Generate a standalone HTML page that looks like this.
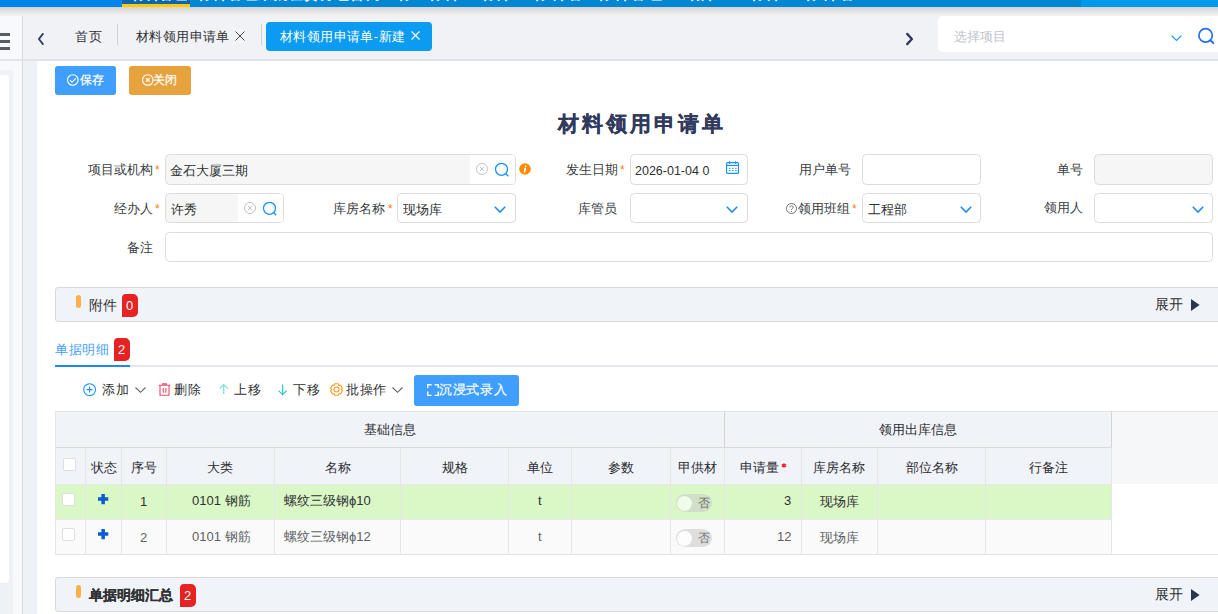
<!DOCTYPE html>
<html><head><meta charset="utf-8">
<style>
*{box-sizing:border-box;margin:0;padding:0}
html,body{width:1218px;height:614px;overflow:hidden;background:#fff;font-family:"Liberation Sans",sans-serif;color:#303133}
.a{position:absolute}
svg{position:absolute;overflow:visible}
.t{position:absolute;white-space:nowrap;line-height:1}
</style></head><body>
<div class="a" style="left:0px;top:0px;width:1218px;height:7px;background:#0086e8;"></div>
<div class="a" style="left:190px;top:0px;width:891px;height:7px;background:#0086d2;"></div>
<div class="a" style="left:1081px;top:0px;width:137px;height:7px;background:#0099ea;"></div>
<div class="a" style="left:122px;top:0px;width:68px;height:7px;background:#0a66b0;border-bottom:3px solid #ffcc00"></div>
<div class="a" style="left:130.7px;top:0;width:56.5px;height:3px;overflow:hidden"><div class="t" style="left:0;top:-13px;font-size:14px;font-weight:bold;color:#fff;letter-spacing:0.17px">材料管理</div></div>
<div class="a" style="left:197px;top:0;width:189px;height:3px;overflow:hidden"><div class="t" style="left:0;top:-13px;font-size:14px;font-weight:bold;color:#fff;letter-spacing:1.33px">材料管理采购租赁分包合同结</div></div>
<div class="a" style="left:397px;top:0;width:19px;height:3px;overflow:hidden"><div class="t" style="left:0;top:-13px;font-size:14px;font-weight:bold;color:#fff;letter-spacing:0.00px">材</div></div>
<div class="a" style="left:428px;top:0;width:32px;height:3px;overflow:hidden"><div class="t" style="left:0;top:-13px;font-size:14px;font-weight:bold;color:#fff;letter-spacing:2.00px">材料</div></div>
<div class="a" style="left:481px;top:0;width:30px;height:3px;overflow:hidden"><div class="t" style="left:0;top:-13px;font-size:14px;font-weight:bold;color:#fff;letter-spacing:0.00px">材料</div></div>
<div class="a" style="left:533px;top:0;width:50px;height:3px;overflow:hidden"><div class="t" style="left:0;top:-13px;font-size:14px;font-weight:bold;color:#fff;letter-spacing:3.50px">材料管</div></div>
<div class="a" style="left:597px;top:0;width:65px;height:3px;overflow:hidden"><div class="t" style="left:0;top:-13px;font-size:14px;font-weight:bold;color:#fff;letter-spacing:3.00px">材料管理</div></div>
<div class="a" style="left:687.5px;top:0;width:27.0px;height:3px;overflow:hidden"><div class="t" style="left:0;top:-13px;font-size:14px;font-weight:bold;color:#fff;letter-spacing:-3.00px">材料</div></div>
<div class="a" style="left:749.6px;top:0;width:31.899999999999977px;height:3px;overflow:hidden"><div class="t" style="left:0;top:-13px;font-size:14px;font-weight:bold;color:#fff;letter-spacing:1.90px">材料</div></div>
<div class="a" style="left:803.7px;top:0;width:51.69999999999993px;height:3px;overflow:hidden"><div class="t" style="left:0;top:-13px;font-size:14px;font-weight:bold;color:#fff;letter-spacing:4.35px">材料管</div></div>
<div class="a" style="left:0px;top:7px;width:1218px;height:9px;background:linear-gradient(#d3d3d3,#f3f3f3);"></div>
<div class="a" style="left:0px;top:16px;width:23px;height:598px;background:#f7f9fc;border-right:1px solid #d6dae0"></div>
<div class="a" style="left:0px;top:33px;width:10px;height:3px;background:#585c63;"></div>
<div class="a" style="left:0px;top:40px;width:10px;height:3px;background:#585c63;"></div>
<div class="a" style="left:0px;top:47px;width:10px;height:3px;background:#585c63;"></div>
<div class="a" style="left:0px;top:70px;width:13px;height:544px;background:#eef1f6;"></div>
<div class="a" style="left:0px;top:75px;width:9px;height:508px;background:#fff;border-radius:0 4px 4px 0"></div>
<div class="a" style="left:23px;top:16px;width:1195px;height:43px;background:#f0f2f6;"></div>
<div class="a" style="left:0px;top:59px;width:1218px;height:2px;background:#dfe3ea;"></div>
<div class="a" style="left:23px;top:61px;width:14px;height:553px;background:#eef1f6;"></div>
<svg style="left:38px;top:33px" width="7" height="12" viewBox="0 0 7 12"><polyline points="4.9,0.9 0.9,6 4.9,11.1" fill="none" stroke="#353e66" stroke-width="1.9" stroke-linecap="round" stroke-linejoin="round"/></svg>
<div class="t" style="left:75px;top:30px;font-size:13px;color:#303133;font-weight:normal;letter-spacing:0.5px;">首页</div>
<div class="a" style="left:117px;top:24px;width:1px;height:21px;background:#cdd1d8;"></div>
<div class="t" style="left:136px;top:30px;font-size:13px;color:#303133;font-weight:normal;letter-spacing:0.4px;">材料领用申请单</div>
<svg style="left:235px;top:31px" width="10" height="10" viewBox="0 0 10 10"><path d="M0.5,0.5 L9.5,9.5 M9.5,0.5 L0.5,9.5" stroke="#45474d" stroke-width="1"/></svg>
<div class="a" style="left:261px;top:24px;width:1px;height:21px;background:#cdd1d8;"></div>
<div class="a" style="left:266px;top:22px;width:166px;height:29px;background:#0b9bf0;border-radius:4px"></div>
<div class="t" style="left:280px;top:30px;font-size:13px;color:#fff;font-weight:normal;letter-spacing:0.4px;">材料领用申请单-新建</div>
<svg style="left:411px;top:31px" width="9" height="9" viewBox="0 0 9 9"><path d="M0.5,0.5 L8.5,8.5 M8.5,0.5 L0.5,8.5" stroke="#fff" stroke-width="1.2"/></svg>
<svg style="left:906px;top:33px" width="7" height="12" viewBox="0 0 7 12"><polyline points="1.2,0.9 5.9,6 1.2,11.1" fill="none" stroke="#2f3760" stroke-width="2.3" stroke-linecap="round" stroke-linejoin="round"/></svg>
<div class="a" style="left:938px;top:16px;width:290px;height:36px;background:#fff;border-radius:5px"></div>
<div class="t" style="left:954px;top:30px;font-size:13px;color:#c0c4cc;font-weight:normal;letter-spacing:0px;">选择项目</div>
<svg style="left:1171px;top:35px" width="11" height="6" viewBox="0 0 11 6"><polyline points="0.6,0.6 5.5,5.4 10.4,0.6" fill="none" stroke="#1a9cf5" stroke-width="1.3"/></svg>
<svg style="left:1198px;top:28px" width="17" height="17" viewBox="0 0 17 17"><circle cx="7.6" cy="7.4" r="6.7" fill="none" stroke="#2a6df5" stroke-width="1.7"/><line x1="12.4" y1="12.2" x2="15.3" y2="15.1" stroke="#2a6df5" stroke-width="2" stroke-linecap="round"/></svg>
<div class="a" style="left:55px;top:66px;width:61px;height:29px;background:#409eff;border-radius:3px"></div>
<svg style="left:67px;top:74px" width="12" height="12" viewBox="0 0 12 12"><circle cx="5.8" cy="6" r="5.3" fill="none" stroke="#fff" stroke-width="1.1"/><polyline points="3,6.2 5,8.3 8.8,4.3" fill="none" stroke="#fff" stroke-width="1.1"/></svg>
<div class="t" style="left:80px;top:74px;font-size:12px;color:#fff;font-weight:normal;letter-spacing:0px;-webkit-text-stroke:0.25px #fff">保存</div>
<div class="a" style="left:129px;top:66px;width:62px;height:29px;background:#e6a23c;border-radius:3px"></div>
<svg style="left:141.5px;top:74px" width="12" height="12" viewBox="0 0 12 12"><circle cx="5.8" cy="6" r="5.3" fill="none" stroke="#fff" stroke-width="1.1"/><path d="M4,4.2 L7.6,7.8 M7.6,4.2 L4,7.8" stroke="#fff" stroke-width="1.3"/></svg>
<div class="t" style="left:153px;top:74px;font-size:12px;color:#fff;font-weight:normal;letter-spacing:0px;-webkit-text-stroke:0.25px #fff">关闭</div>
<div class="t" style="left:558px;top:113px;font-size:21px;color:#2f3a5c;font-weight:bold;letter-spacing:3px;-webkit-text-stroke:0.2px #2f3a5c">材料领用申请单</div>
<div class="t" style="left:88px;top:163px;font-size:13px;color:#3a3d42;font-weight:normal;letter-spacing:0px;">项目或机构</div>
<div class="t" style="left:155px;top:164px;font-size:12px;color:#ff7d10;font-weight:normal;letter-spacing:0px;">*</div>
<div class="a" style="left:165px;top:154px;width:351px;height:31px;background:#f6f6f6;border:1px solid #dcdcdc;border-radius:4.5px;"></div>
<div class="a" style="left:470px;top:155px;width:45px;height:29px;background:#fff;border-radius:0 3px 3px 0"></div>
<div class="t" style="left:170px;top:164px;font-size:13px;color:#303133;font-weight:normal;letter-spacing:0px;">金石大厦三期</div>
<svg style="left:476px;top:163px" width="12" height="12" viewBox="0 0 12 12"><circle cx="6" cy="6" r="5.5" fill="none" stroke="#c0c4cc" stroke-width="1"/><path d="M4,4 L8,8 M8,4 L4,8" stroke="#c0c4cc" stroke-width="1"/></svg>
<svg style="left:495px;top:163px" width="14" height="14" viewBox="0 0 14 14"><circle cx="6.5" cy="6.3" r="6" fill="none" stroke="#1890ff" stroke-width="1.25"/><line x1="10.6" y1="10.5" x2="13.3" y2="13.3" stroke="#1890ff" stroke-width="1.3"/></svg>
<svg style="left:519px;top:163px" width="12" height="12" viewBox="0 0 12 12"><circle cx="6" cy="6" r="5.8" fill="#ff8a00"/><path d="M6.7,3 L6.7,3.2 M6.3,5.2 L5.5,9" stroke="#fff" stroke-width="1.6" stroke-linecap="round"/></svg>
<div class="t" style="left:566px;top:163px;font-size:13px;color:#3a3d42;font-weight:normal;letter-spacing:0px;">发生日期</div>
<div class="t" style="left:620px;top:164px;font-size:12px;color:#ff7d10;font-weight:normal;letter-spacing:0px;">*</div>
<div class="a" style="left:630px;top:154px;width:118px;height:31px;background:#fff;border:1px solid #dcdcdc;border-radius:4.5px;"></div>
<div class="t" style="left:635px;top:165px;font-size:12.5px;color:#303133;font-weight:normal;letter-spacing:0px;">2026-01-04 0</div>
<svg style="left:726px;top:161px" width="13" height="13" viewBox="0 0 13 13"><rect x="0.6" y="1.6" width="11.9" height="10.8" rx="1" fill="none" stroke="#1890ff" stroke-width="1.15"/><line x1="0.6" y1="4.4" x2="12.5" y2="4.4" stroke="#1890ff" stroke-width="1.15"/><path d="M3.6,0.2 V2.8 M9.5,0.2 V2.8" stroke="#1890ff" stroke-width="1.2"/><path d="M2.9,7.3 H4.6 M5.9,7.3 H7.6 M8.9,7.3 H10.6 M2.9,9.6 H4.6 M5.9,9.6 H7.6 M8.9,9.6 H10.6" stroke="#1890ff" stroke-width="0.95"/></svg>
<div class="t" style="left:799px;top:163px;font-size:13px;color:#3a3d42;font-weight:normal;letter-spacing:0px;">用户单号</div>
<div class="a" style="left:862px;top:154px;width:119px;height:31px;background:#fff;border:1px solid #dcdcdc;border-radius:4.5px;"></div>
<div class="t" style="left:1057px;top:163px;font-size:13px;color:#3a3d42;font-weight:normal;letter-spacing:0px;">单号</div>
<div class="a" style="left:1094px;top:154px;width:119px;height:31px;background:#f6f6f6;border:1px solid #dcdcdc;border-radius:4.5px;"></div>
<div class="t" style="left:114px;top:202px;font-size:13px;color:#3a3d42;font-weight:normal;letter-spacing:0px;">经办人</div>
<div class="t" style="left:155px;top:203px;font-size:12px;color:#ff7d10;font-weight:normal;letter-spacing:0px;">*</div>
<div class="a" style="left:165px;top:193px;width:119px;height:30px;background:#f6f6f6;border:1px solid #dcdcdc;border-radius:4.5px;"></div>
<div class="a" style="left:238px;top:194px;width:45px;height:28px;background:#fff;border-radius:0 3px 3px 0"></div>
<div class="t" style="left:171px;top:203px;font-size:13px;color:#303133;font-weight:normal;letter-spacing:0px;">许秀</div>
<svg style="left:244px;top:202px" width="12" height="12" viewBox="0 0 12 12"><circle cx="6" cy="6" r="5.5" fill="none" stroke="#c0c4cc" stroke-width="1"/><path d="M4,4 L8,8 M8,4 L4,8" stroke="#c0c4cc" stroke-width="1"/></svg>
<svg style="left:263px;top:202px" width="14" height="14" viewBox="0 0 14 14"><circle cx="6.5" cy="6.3" r="6" fill="none" stroke="#1890ff" stroke-width="1.25"/><line x1="10.6" y1="10.5" x2="13.3" y2="13.3" stroke="#1890ff" stroke-width="1.3"/></svg>
<div class="t" style="left:333px;top:202px;font-size:13px;color:#3a3d42;font-weight:normal;letter-spacing:0px;">库房名称</div>
<div class="t" style="left:388px;top:203px;font-size:12px;color:#ff7d10;font-weight:normal;letter-spacing:0px;">*</div>
<div class="a" style="left:397px;top:193px;width:119px;height:30px;background:#fff;border:1px solid #dcdcdc;border-radius:4.5px;"></div>
<div class="t" style="left:403px;top:203px;font-size:13px;color:#303133;font-weight:normal;letter-spacing:0px;">现场库</div>
<svg style="left:494px;top:206px" width="12" height="7" viewBox="0 0 12 7"><polyline points="0.8,0.8 6,6 11.2,0.8" fill="none" stroke="#1d8cf0" stroke-width="1.6"/></svg>
<div class="t" style="left:578px;top:202px;font-size:13px;color:#3a3d42;font-weight:normal;letter-spacing:0px;">库管员</div>
<div class="a" style="left:630px;top:193px;width:118px;height:30px;background:#fff;border:1px solid #dcdcdc;border-radius:4.5px;"></div>
<svg style="left:726px;top:206px" width="12" height="7" viewBox="0 0 12 7"><polyline points="0.8,0.8 6,6 11.2,0.8" fill="none" stroke="#1d8cf0" stroke-width="1.6"/></svg>
<div class="t" style="left:798px;top:202px;font-size:13px;color:#3a3d42;font-weight:normal;letter-spacing:0px;">领用班组</div>
<div class="t" style="left:852px;top:203px;font-size:12px;color:#ff7d10;font-weight:normal;letter-spacing:0px;">*</div>
<svg style="left:786px;top:203px" width="11" height="11" viewBox="0 0 11 11"><circle cx="5.5" cy="5.5" r="5" fill="none" stroke="#606266" stroke-width="0.9"/><path d="M3.8,4.3 C3.8,2.3 7.2,2.3 7.2,4.3 C7.2,5.5 5.5,5.5 5.5,6.8" fill="none" stroke="#606266" stroke-width="0.9"/><circle cx="5.5" cy="8.3" r="0.6" fill="#606266"/></svg>
<div class="a" style="left:862px;top:193px;width:119px;height:30px;background:#fff;border:1px solid #dcdcdc;border-radius:4.5px;"></div>
<div class="t" style="left:868px;top:203px;font-size:13px;color:#303133;font-weight:normal;letter-spacing:0px;">工程部</div>
<svg style="left:960px;top:206px" width="12" height="7" viewBox="0 0 12 7"><polyline points="0.8,0.8 6,6 11.2,0.8" fill="none" stroke="#1d8cf0" stroke-width="1.6"/></svg>
<div class="t" style="left:1044px;top:201px;font-size:13px;color:#3a3d42;font-weight:normal;letter-spacing:0px;">领用人</div>
<div class="a" style="left:1094px;top:193px;width:119px;height:30px;background:#fff;border:1px solid #dcdcdc;border-radius:4.5px;"></div>
<svg style="left:1192px;top:206px" width="12" height="7" viewBox="0 0 12 7"><polyline points="0.8,0.8 6,6 11.2,0.8" fill="none" stroke="#1d8cf0" stroke-width="1.6"/></svg>
<div class="t" style="left:127px;top:241px;font-size:13px;color:#3a3d42;font-weight:normal;letter-spacing:0px;">备注</div>
<div class="a" style="left:165px;top:232px;width:1048px;height:30px;background:#fff;border:1px solid #dcdcdc;border-radius:4.5px;"></div>
<div class="a" style="left:55px;top:287px;width:1180px;height:35px;background:#f0f3f8;border:1px solid #d9d9d9;border-radius:3px"></div>
<div class="a" style="left:76px;top:295px;width:5px;height:13px;background:#fdb04a;border-radius:3px"></div>
<div class="t" style="left:89px;top:298px;font-size:14px;color:#303133;font-weight:normal;letter-spacing:0px;">附件</div>
<div class="a" style="left:122px;top:294px;width:16px;height:23px;background:#e62222;border-radius:4px 5px 5px 0"></div>
<div class="t" style="left:126px;top:299px;font-size:13px;color:#fff;font-weight:normal;letter-spacing:0px;">0</div>
<div class="t" style="left:1155px;top:297px;font-size:14px;color:#303133;font-weight:normal;letter-spacing:0px;">展开</div>
<svg style="left:1191px;top:299px" width="9" height="12" viewBox="0 0 9 12"><polygon points="0,0 8.6,6 0,12" fill="#2a3550"/></svg>
<div class="t" style="left:55px;top:343px;font-size:13px;color:#409eff;font-weight:normal;letter-spacing:0.5px;">单据明细</div>
<div class="a" style="left:114px;top:338px;width:16px;height:23px;background:#e62222;border-radius:4px 5px 5px 0"></div>
<div class="t" style="left:118px;top:343px;font-size:13px;color:#fff;font-weight:normal;letter-spacing:0px;">2</div>
<div class="a" style="left:55px;top:365px;width:1163px;height:2px;background:#e4e7ed;"></div>
<div class="a" style="left:55px;top:365px;width:75px;height:2px;background:#1e88f0;"></div>
<svg style="left:83px;top:383px" width="13" height="13" viewBox="0 0 13 13"><circle cx="6.6" cy="6.6" r="5.9" fill="none" stroke="#1890ff" stroke-width="1.1"/><path d="M6.6,3.6 V9.6 M3.6,6.6 H9.6" stroke="#1890ff" stroke-width="1.1"/></svg>
<div class="t" style="left:102px;top:383px;font-size:13px;color:#303133;font-weight:normal;letter-spacing:0.5px;">添加</div>
<svg style="left:135px;top:387px" width="11" height="6" viewBox="0 0 11 6"><polyline points="0.5,0.5 5.5,5.3 10.5,0.5" fill="none" stroke="#606266" stroke-width="1.1"/></svg>
<svg style="left:158px;top:383px" width="13" height="13" viewBox="0 0 13 13"><path d="M0.6,2.3 H12.4 M4.6,2.2 V0.9 H8.4 V2.2" fill="none" stroke="#f2466a" stroke-width="1.1"/><path d="M2,2.3 V12.3 H11 V2.3" fill="none" stroke="#f2466a" stroke-width="1.1"/><path d="M5.3,5 V9.8 M7.9,5 V9.8" stroke="#f2466a" stroke-width="1.1"/></svg>
<div class="t" style="left:174px;top:383px;font-size:13px;color:#303133;font-weight:normal;letter-spacing:0.5px;">删除</div>
<svg style="left:219px;top:384px" width="10" height="10" viewBox="0 0 10 10"><path d="M4.7,0.6 V10 M0.6,4.6 L4.7,0.6 L8.8,4.6" fill="none" stroke="#7fe0d5" stroke-width="1.3"/></svg>
<div class="t" style="left:234px;top:383px;font-size:13px;color:#303133;font-weight:normal;letter-spacing:0.5px;">上移</div>
<svg style="left:278px;top:384px" width="10" height="12" viewBox="0 0 10 12"><path d="M4.6,0.6 V11 M0.5,6.6 L4.6,10.7 L8.7,6.6" fill="none" stroke="#3cc8c0" stroke-width="1.3"/></svg>
<div class="t" style="left:293px;top:383px;font-size:13px;color:#303133;font-weight:normal;letter-spacing:0.5px;">下移</div>
<svg style="left:329.5px;top:383.3px" width="13" height="13" viewBox="0 0 13 13"><path d="M11.20,6.52 L12.38,7.71 L10.49,10.98 L8.86,10.56 L8.84,10.58 L8.39,12.20 L4.61,12.20 L4.16,10.58 L4.14,10.56 L2.51,10.98 L0.62,7.71 L1.80,6.52 L1.80,6.48 L0.62,5.29 L2.51,2.02 L4.14,2.44 L4.16,2.42 L4.61,0.80 L8.39,0.80 L8.84,2.42 L8.86,2.44 L10.49,2.02 L12.38,5.29 L11.20,6.48 Z" fill="none" stroke="#ff9a1e" stroke-width="1.1" stroke-linejoin="round"/><circle cx="6.5" cy="6.5" r="2.5" fill="none" stroke="#ff9a1e" stroke-width="1.1"/></svg>
<div class="t" style="left:346px;top:383px;font-size:13px;color:#303133;font-weight:normal;letter-spacing:0.5px;">批操作</div>
<svg style="left:392px;top:387px" width="11" height="6" viewBox="0 0 11 6"><polyline points="0.5,0.5 5.5,5.3 10.5,0.5" fill="none" stroke="#606266" stroke-width="1.1"/></svg>
<div class="a" style="left:414px;top:375px;width:105px;height:31px;background:#409eff;border-radius:3px"></div>
<svg style="left:427px;top:384px" width="12" height="12" viewBox="0 0 12 12"><path d="M0.7,4 V0.7 H4.6 M7.6,0.7 H11.3 V4 M11.3,7.6 V11.3 H7.6 M4.6,11.3 H0.7 V7.6" fill="none" stroke="#fff" stroke-width="1.35"/></svg>
<div class="t" style="left:439px;top:383px;font-size:13px;color:#fff;font-weight:normal;letter-spacing:0.7px;-webkit-text-stroke:0.2px #fff">沉浸式录入</div>
<div class="a" style="left:55px;top:411px;width:1163px;height:73px;background:#f6f7f8;"></div>
<div class="a" style="left:55px;top:411px;width:1056px;height:73px;background:#f0f3f8;"></div>
<div class="a" style="left:55px;top:484px;width:1056px;height:35px;background:#daf7c6;"></div>
<div class="a" style="left:55px;top:519px;width:1056px;height:35px;background:#fafafa;"></div>
<div class="a" style="left:55px;top:411px;width:1163px;height:1px;background:#e6e6e6;"></div>
<div class="a" style="left:55px;top:484px;width:1056px;height:1px;background:#e9e9ec;"></div>
<div class="a" style="left:55px;top:519px;width:1056px;height:1px;background:#e9e9ec;"></div>
<div class="a" style="left:55px;top:554px;width:1163px;height:1px;background:#e3e3e3;"></div>
<div class="a" style="left:55px;top:411px;width:1px;height:143px;background:#e6e6e6;"></div>
<div class="a" style="left:85px;top:447px;width:1px;height:107px;background:#e6e6e9;"></div>
<div class="a" style="left:121px;top:447px;width:1px;height:107px;background:#e6e6e9;"></div>
<div class="a" style="left:166px;top:447px;width:1px;height:107px;background:#e6e6e9;"></div>
<div class="a" style="left:274px;top:447px;width:1px;height:107px;background:#e6e6e9;"></div>
<div class="a" style="left:400px;top:447px;width:1px;height:107px;background:#e6e6e9;"></div>
<div class="a" style="left:508px;top:447px;width:1px;height:107px;background:#e6e6e9;"></div>
<div class="a" style="left:571px;top:447px;width:1px;height:107px;background:#e6e6e9;"></div>
<div class="a" style="left:670px;top:447px;width:1px;height:107px;background:#e6e6e9;"></div>
<div class="a" style="left:724px;top:411px;width:1px;height:143px;background:#e6e6e9;"></div>
<div class="a" style="left:801px;top:447px;width:1px;height:107px;background:#e6e6e9;"></div>
<div class="a" style="left:877px;top:447px;width:1px;height:107px;background:#e6e6e9;"></div>
<div class="a" style="left:985px;top:447px;width:1px;height:107px;background:#e6e6e9;"></div>
<div class="a" style="left:1111px;top:411px;width:1px;height:143px;background:#e6e6e6;"></div>
<div class="a" style="left:724px;top:411px;width:1px;height:36px;background:#d4d4d4;"></div>
<div class="a" style="left:1111px;top:411px;width:1px;height:36px;background:#d4d4d4;"></div>
<div class="a" style="left:55px;top:447px;width:1056px;height:1px;background:#dadada;"></div>
<div class="t" style="left:364px;top:423px;font-size:13px;color:#2b2d31;font-weight:normal;letter-spacing:0px;">基础信息</div>
<div class="t" style="left:879px;top:423px;font-size:13px;color:#2b2d31;font-weight:normal;letter-spacing:0px;">领用出库信息</div>
<div class="t" style="left:91px;top:461px;font-size:13px;color:#2b2d31;font-weight:normal;letter-spacing:0px;">状态</div>
<div class="t" style="left:131px;top:461px;font-size:13px;color:#2b2d31;font-weight:normal;letter-spacing:0px;">序号</div>
<div class="t" style="left:207px;top:461px;font-size:13px;color:#2b2d31;font-weight:normal;letter-spacing:0px;">大类</div>
<div class="t" style="left:325px;top:461px;font-size:13px;color:#2b2d31;font-weight:normal;letter-spacing:0px;">名称</div>
<div class="t" style="left:442px;top:461px;font-size:13px;color:#2b2d31;font-weight:normal;letter-spacing:0px;">规格</div>
<div class="t" style="left:527px;top:461px;font-size:13px;color:#2b2d31;font-weight:normal;letter-spacing:0px;">单位</div>
<div class="t" style="left:608px;top:461px;font-size:13px;color:#2b2d31;font-weight:normal;letter-spacing:0px;">参数</div>
<div class="t" style="left:678px;top:461px;font-size:13px;color:#2b2d31;font-weight:normal;letter-spacing:0px;">甲供材</div>
<div class="t" style="left:813px;top:461px;font-size:13px;color:#2b2d31;font-weight:normal;letter-spacing:0px;">库房名称</div>
<div class="t" style="left:906px;top:461px;font-size:13px;color:#2b2d31;font-weight:normal;letter-spacing:0px;">部位名称</div>
<div class="t" style="left:1029px;top:461px;font-size:13px;color:#2b2d31;font-weight:normal;letter-spacing:0px;">行备注</div>
<div class="t" style="left:740px;top:461px;font-size:13px;color:#2b2d31;font-weight:normal;letter-spacing:0px;">申请量</div>
<svg style="left:781px;top:463px" width="6" height="5" viewBox="0 0 6 5"><path d="M3,0.3 V4.7 M0.8,1.4 L5.2,3.6 M5.2,1.4 L0.8,3.6" stroke="#f5222d" stroke-width="1.2"/></svg>
<div class="a" style="left:63px;top:458px;width:13px;height:13px;background:#fff;border:1px solid #dcdfe6;border-radius:2px"></div>
<div class="a" style="left:62px;top:493px;width:13px;height:13px;background:#fff;border:1px solid #dcdfe6;border-radius:2px"></div>
<svg style="left:97.6px;top:493.7px" width="10.3" height="10.2" viewBox="0 0 10.3 10.2"><path d="M5.15,0 V10.2 M0,5.0 H10.3" stroke="#0a5ccf" stroke-width="3.5"/></svg>
<div class="t" style="left:140px;top:495px;font-size:13px;color:#303133;font-weight:normal;letter-spacing:0px;">1</div>
<div class="t" style="left:192px;top:494px;font-size:13px;color:#303133;font-weight:normal;letter-spacing:0px;">0101 钢筋</div>
<div class="t" style="left:284px;top:494px;font-size:13px;color:#303133;font-weight:normal;letter-spacing:0px;">螺纹三级钢ϕ10</div>
<div class="t" style="left:538px;top:494px;font-size:13px;color:#303133;font-weight:normal;letter-spacing:0px;">t</div>
<div class="a" style="left:676px;top:494px;width:36px;height:18px;opacity:0.6">
<div class="a" style="left:0;top:0;width:36px;height:18px;border-radius:9px;background:#cdcdcd"></div>
<div class="a" style="left:1px;top:1.5px;width:15px;height:15px;border-radius:50%;background:#fff"></div>
<div class="t" style="left:22px;top:3px;font-size:12px;color:#151515;font-weight:normal;letter-spacing:0px;">否</div>
</div>
<div class="t" style="left:784px;top:494px;font-size:13px;color:#303133;font-weight:normal;letter-spacing:0px;">3</div>
<div class="t" style="left:820px;top:495px;font-size:13px;color:#303133;font-weight:normal;letter-spacing:0px;">现场库</div>
<div class="a" style="left:62px;top:528px;width:13px;height:13px;background:#fff;border:1px solid #dcdfe6;border-radius:2px"></div>
<svg style="left:97.6px;top:528.7px" width="10.3" height="10.2" viewBox="0 0 10.3 10.2"><path d="M5.15,0 V10.2 M0,5.0 H10.3" stroke="#0a5ccf" stroke-width="3.5"/></svg>
<div class="t" style="left:140px;top:531px;font-size:13px;color:#606266;font-weight:normal;letter-spacing:0px;">2</div>
<div class="t" style="left:192px;top:530px;font-size:13px;color:#606266;font-weight:normal;letter-spacing:0px;">0101 钢筋</div>
<div class="t" style="left:284px;top:530px;font-size:13px;color:#606266;font-weight:normal;letter-spacing:0px;">螺纹三级钢ϕ12</div>
<div class="t" style="left:538px;top:530px;font-size:13px;color:#606266;font-weight:normal;letter-spacing:0px;">t</div>
<div class="a" style="left:676px;top:529px;width:36px;height:18px;opacity:0.6">
<div class="a" style="left:0;top:0;width:36px;height:18px;border-radius:9px;background:#cdcdcd"></div>
<div class="a" style="left:1px;top:1.5px;width:15px;height:15px;border-radius:50%;background:#fff"></div>
<div class="t" style="left:22px;top:3px;font-size:12px;color:#151515;font-weight:normal;letter-spacing:0px;">否</div>
</div>
<div class="t" style="left:777px;top:530px;font-size:13px;color:#606266;font-weight:normal;letter-spacing:0px;">12</div>
<div class="t" style="left:820px;top:531px;font-size:13px;color:#606266;font-weight:normal;letter-spacing:0px;">现场库</div>
<div class="a" style="left:55px;top:577px;width:1180px;height:35px;background:#f0f3f8;border:1px solid #d9d9d9;border-radius:3px"></div>
<div class="a" style="left:76px;top:585px;width:5px;height:13px;background:#fdb04a;border-radius:3px"></div>
<div class="t" style="left:89px;top:588px;font-size:14px;color:#303133;font-weight:bold;letter-spacing:0px;-webkit-text-stroke:0.15px #303133">单据明细汇总</div>
<div class="a" style="left:180px;top:584px;width:16px;height:23px;background:#e62222;border-radius:4px 5px 5px 0"></div>
<div class="t" style="left:184px;top:589px;font-size:13px;color:#fff;font-weight:normal;letter-spacing:0px;">2</div>
<div class="t" style="left:1155px;top:587px;font-size:14px;color:#303133;font-weight:normal;letter-spacing:0px;">展开</div>
<svg style="left:1191px;top:589px" width="9" height="12" viewBox="0 0 9 12"><polygon points="0,0 8.6,6 0,12" fill="#2a3550"/></svg>
</body></html>
